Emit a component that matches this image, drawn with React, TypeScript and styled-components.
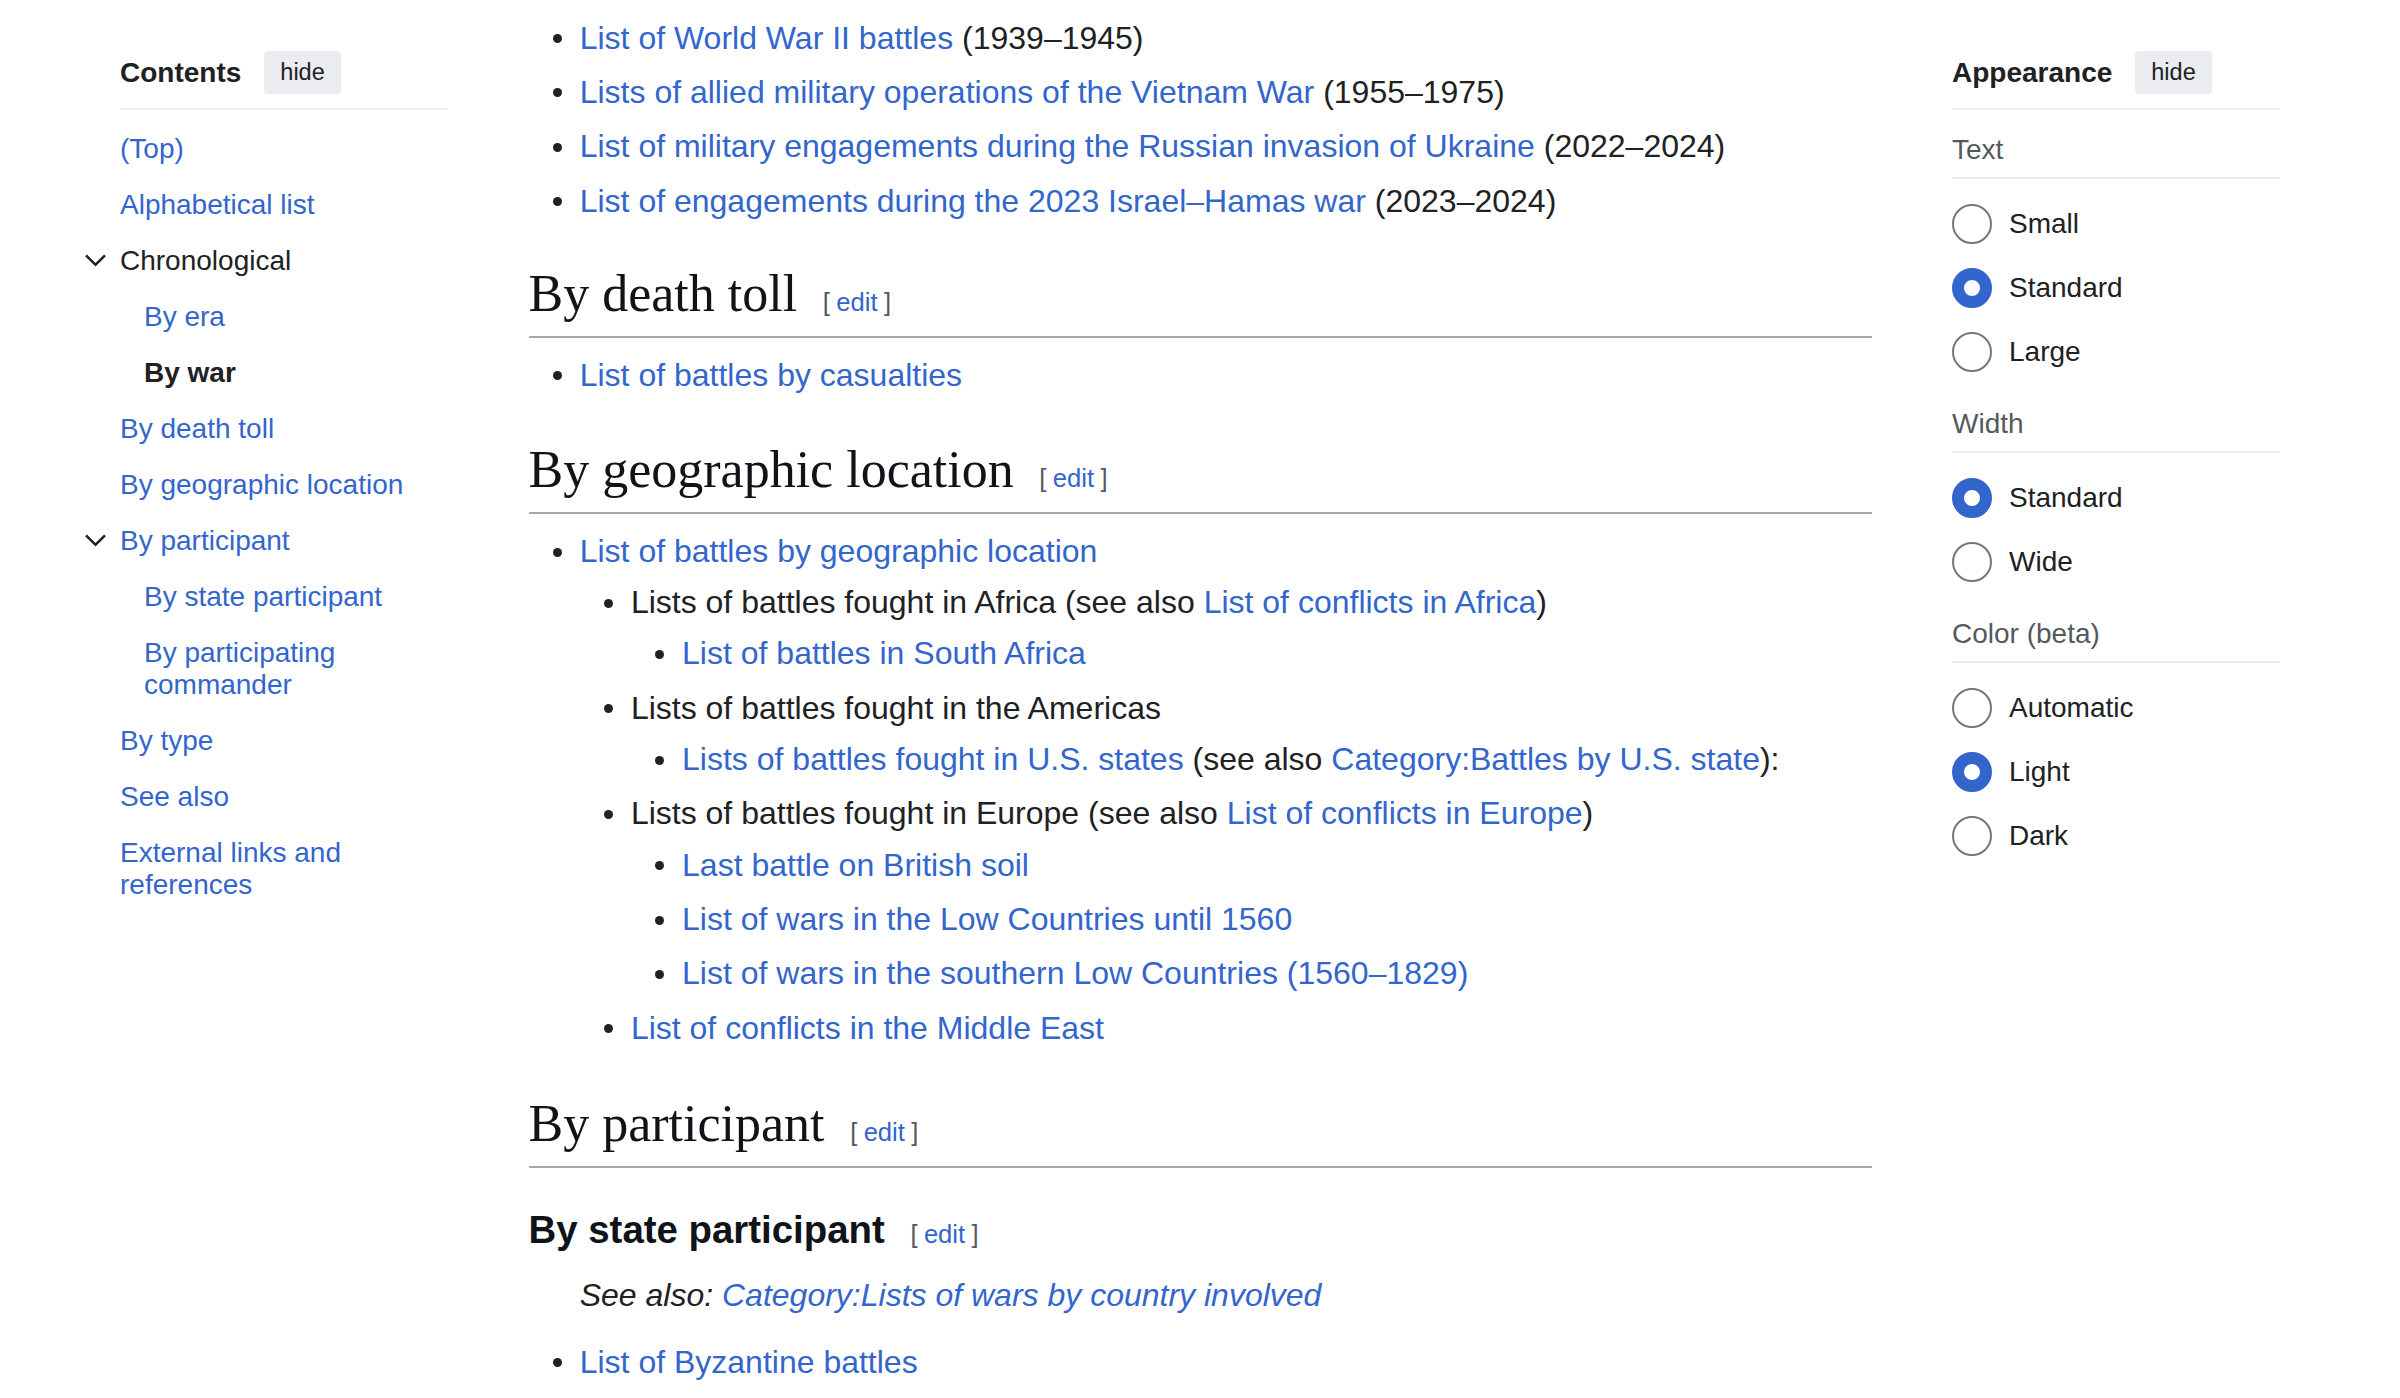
import React from 'react';
import styled, { createGlobalStyle } from 'styled-components';

const GlobalStyle = createGlobalStyle`
  html, body { margin: 0; padding: 0; background: #fff; overflow: hidden; }
  body {
    font-family: "Liberation Sans", Arial, sans-serif;
    color: #202122;
  }
  * { box-sizing: border-box; }
`;

const Page = styled.div`
  display: grid;
  grid-template-columns: 328px 1343px 328px;
  column-gap: 80.5px;
  padding-left: 120px;
  align-items: start;
`;

/* ---------- side panels ---------- */

const Panel = styled.nav`
  padding-top: 51px;
  font-size: 28px;
`;

const PanelHeader = styled.div`
  display: flex;
  align-items: center;
  gap: 23px;
  padding-bottom: 14px;
  border-bottom: 2px solid #eaecf0;
`;

const PanelTitle = styled.h2`
  margin: 0;
  font-size: 28px;
  font-weight: bold;
  color: #202122;
`;

const HideButton = styled.button`
  height: 43px;
  padding: 0 16px;
  border: 0;
  border-radius: 4px;
  background: #eaecf0;
  color: #202122;
  font-family: "Liberation Sans", Arial, sans-serif;
  font-size: 23.5px;
  cursor: pointer;
`;

const TocList = styled.ul`
  list-style: none;
  margin: 11px 0 0;
  padding: 0;
`;

const TocRow = styled.li<{ $level: number }>`
  display: flex;
  align-items: flex-start;
  padding: 12px 0 12px ${p => p.$level * 24}px;
  line-height: 32px;
`;

const ToggleSlot = styled.span`
  flex: none;
  width: 36px;
  margin-left: -36px;
  padding-top: 3.5px;
  display: flex;
`;

const TocText = styled.a<{ $state: 'link' | 'ancestor' | 'active' }>`
  color: ${p => (p.$state === 'link' ? '#3366cc' : '#202122')};
  font-weight: ${p => (p.$state === 'active' ? 'bold' : 'normal')};
  text-decoration: none;
`;

const Chevron = () => (
  <svg width="23" height="23" viewBox="0 0 20 20" aria-hidden="true">
    <path d="m17.5 4.75-7.5 7.5-7.5-7.5L1 6.25l9 9 9-9z" fill="#202122" />
  </svg>
);

type TocEntry = { label: string; level: number; toggle?: boolean; state?: 'link' | 'ancestor' | 'active' };

const toc: TocEntry[] = [
  { label: '(Top)', level: 0 },
  { label: 'Alphabetical list', level: 0 },
  { label: 'Chronological', level: 0, toggle: true, state: 'ancestor' },
  { label: 'By era', level: 1 },
  { label: 'By war', level: 1, state: 'active' },
  { label: 'By death toll', level: 0 },
  { label: 'By geographic location', level: 0 },
  { label: 'By participant', level: 0, toggle: true },
  { label: 'By state participant', level: 1 },
  { label: 'By participating commander', level: 1 },
  { label: 'By type', level: 0 },
  { label: 'See also', level: 0 },
  { label: 'External links and references', level: 0 },
];

const Section = styled.div`
  margin-top: 24px;
`;

const SectionLabel = styled.div`
  font-size: 28px;
  line-height: 32px;
  color: #54595d;
  padding-bottom: 11px;
  border-bottom: 2px solid #eaecf0;
`;

const Options = styled.div`
  display: flex;
  flex-direction: column;
  gap: 24px;
  padding: 25px 0 12px;
`;

const Option = styled.label`
  display: flex;
  align-items: center;
  gap: 17px;
  height: 40px;
  font-size: 28px;
  color: #202122;
`;

const Radio = styled.span<{ $checked?: boolean }>`
  flex: none;
  width: 40px;
  height: 40px;
  border-radius: 50%;
  background: #fff;
  border: ${p => (p.$checked ? '12px solid #3366cc' : '2px solid #72777d')};
`;

const appearance = [
  { label: 'Text', options: ['Small', 'Standard', 'Large'], checked: 'Standard' },
  { label: 'Width', options: ['Standard', 'Wide'], checked: 'Standard' },
  { label: 'Color (beta)', options: ['Automatic', 'Light', 'Dark'], checked: 'Light' },
];

/* ---------- article ---------- */

const Article = styled.main`
  font-size: 32px;
  line-height: 51.2px;
  color: #202122;
`;

const H2 = styled.h2<{ $mt?: number }>`
  margin: ${p => p.$mt ?? 34}px 0 0;
  padding: 0 0 9px;
  border-bottom: 2px solid #a2a9b1;
  font-family: "Liberation Serif", "Times New Roman", serif;
  font-weight: normal;
  font-size: 52px;
  line-height: 66px;
  color: #101418;
`;

const H3 = styled.h3`
  margin: 11.5px 0 9.6px;
  padding-top: 19.2px;
  font-family: "Liberation Sans", Arial, sans-serif;
  font-weight: bold;
  font-size: 38.4px;
  line-height: 61.44px;
  color: #101418;
`;

const EditSection = styled.span`
  margin-left: 25.6px;
  font-family: "Liberation Sans", Arial, sans-serif;
  font-weight: normal;
  font-size: 25.6px;
  line-height: 1;
  color: #54595d;
`;

const Bracket = styled.span<{ $side: 'open' | 'close' }>`
  margin-${p => (p.$side === 'open' ? 'right' : 'left')}: 0.25em;
`;

const Link = styled.a`
  color: #3366cc;
  text-decoration: none;
`;

const Edit = () => (
  <EditSection>
    <Bracket $side="open">[</Bracket>
    <Link>edit</Link>
    <Bracket $side="close">]</Bracket>
  </EditSection>
);

const List = styled.ul<{ $mt?: number }>`
  list-style: none;
  margin: ${p => p.$mt ?? 0}px 0 0 51.2px;
  padding: 0;
`;

const Item = styled.li`
  margin: 0 0 3.2px;
  &::before {
    content: '';
    display: inline-block;
    width: 9px;
    height: 9px;
    border-radius: 50%;
    background: #202122;
    margin: 0 18px 0 -27px;
    vertical-align: 5.5px;
  }
`;

const Hatnote = styled.div`
  padding-left: 51.2px;
  margin-bottom: 16px;
  font-style: italic;
`;

export default function App() {
  return (
    <>
      <GlobalStyle />
      <Page>
        <Panel aria-label="Contents">
          <PanelHeader>
            <PanelTitle>Contents</PanelTitle>
            <HideButton>hide</HideButton>
          </PanelHeader>
          <TocList>
            {toc.map(e => (
              <TocRow key={e.label} $level={e.level}>
                {e.toggle && (
                  <ToggleSlot>
                    <Chevron />
                  </ToggleSlot>
                )}
                <TocText $state={e.state ?? 'link'}>{e.label}</TocText>
              </TocRow>
            ))}
          </TocList>
        </Panel>

        <Article>
          <List $mt={12.5}>
            <Item>
              <Link>List of World War II battles</Link> (1939–1945)
            </Item>
            <Item>
              <Link>Lists of allied military operations of the Vietnam War</Link> (1955–1975)
            </Item>
            <Item>
              <Link>List of military engagements during the Russian invasion of Ukraine</Link> (2022–2024)
            </Item>
            <Item>
              <Link>List of engagements during the 2023 Israel–Hamas war</Link> (2023–2024)
            </Item>
          </List>

          <H2>
            By death toll
            <Edit />
          </H2>
          <List $mt={12}>
            <Item>
              <Link>List of battles by casualties</Link>
            </Item>
          </List>

          <H2 $mt={36}>
            By geographic location
            <Edit />
          </H2>
          <List $mt={12}>
            <Item>
              <Link>List of battles by geographic location</Link>
              <List>
                <Item>
                  Lists of battles fought in Africa (see also <Link>List of conflicts in Africa</Link>)
                  <List>
                    <Item>
                      <Link>List of battles in South Africa</Link>
                    </Item>
                  </List>
                </Item>
                <Item>
                  Lists of battles fought in the Americas
                  <List>
                    <Item>
                      <Link>Lists of battles fought in U.S. states</Link> (see also{' '}
                      <Link>Category:Battles by U.S. state</Link>):
                    </Item>
                  </List>
                </Item>
                <Item>
                  Lists of battles fought in Europe (see also <Link>List of conflicts in Europe</Link>)
                  <List>
                    <Item>
                      <Link>Last battle on British soil</Link>
                    </Item>
                    <Item>
                      <Link>List of wars in the Low Countries until 1560</Link>
                    </Item>
                    <Item>
                      <Link>List of wars in the southern Low Countries (1560–1829)</Link>
                    </Item>
                  </List>
                </Item>
                <Item>
                  <Link>List of conflicts in the Middle East</Link>
                </Item>
              </List>
            </Item>
          </List>

          <H2 $mt={37}>
            By participant
            <Edit />
          </H2>
          <H3>
            By state participant
            <Edit />
          </H3>
          <Hatnote>
            See also: <Link>Category:Lists of wars by country involved</Link>
          </Hatnote>
          <List $mt={12}>
            <Item>
              <Link>List of Byzantine battles</Link>
            </Item>
          </List>
        </Article>

        <Panel aria-label="Appearance">
          <PanelHeader>
            <PanelTitle>Appearance</PanelTitle>
            <HideButton>hide</HideButton>
          </PanelHeader>
          {appearance.map(s => (
            <Section key={s.label}>
              <SectionLabel>{s.label}</SectionLabel>
              <Options>
                {s.options.map(o => (
                  <Option key={o}>
                    <Radio $checked={o === s.checked} />
                    {o}
                  </Option>
                ))}
              </Options>
            </Section>
          ))}
        </Panel>
      </Page>
    </>
  );
}
